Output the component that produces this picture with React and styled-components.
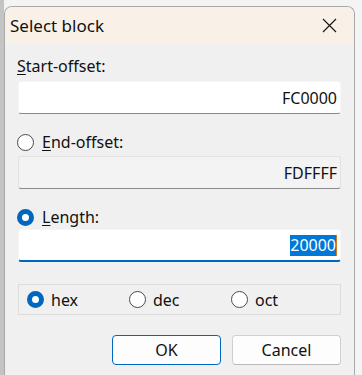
import React from 'react';
import styled, { createGlobalStyle } from 'styled-components';

const GlobalStyle = createGlobalStyle`
  html, body {
    margin: 0;
    padding: 0;
    background: #eaeaea;
    font-family: "Noto Sans", "Open Sans", sans-serif;
    overflow: hidden;
  }
`;

const Page = styled.div`
  width: 362px;
  height: 375px;
  padding: 6px 0 0 4px;
  box-sizing: border-box;
  background: linear-gradient(to right, #c4c4c4 0, #c4c4c4 4px, #f4f4f4 4px);
`;

const Window = styled.div`
  width: 351px;
  height: 380px;
  box-sizing: border-box;
  border: 1px solid #a9a9a9;
  border-bottom: none;
  border-radius: 8px 8px 0 0;
  overflow: hidden;
  display: flex;
  flex-direction: column;
  background: #f0f0f0;
`;

const TitleBar = styled.div`
  height: 37px;
  background: #f9f1e8;
  display: flex;
  align-items: center;
  justify-content: space-between;
  padding: 0 17px 0 5px;
  flex-shrink: 0;
`;

const Title = styled.span`
  font-size: 17px;
  color: #111;
`;

const CloseIcon = () => (
  <svg width="15" height="15" viewBox="0 0 15 15">
    <path d="M1 1 L14 14 M14 1 L1 14" stroke="#1a1a1a" strokeWidth="1.2" fill="none" />
  </svg>
);

const Body = styled.div`
  padding: 10px 13px 0 12px;
  display: flex;
  flex-direction: column;
`;

const Field = styled.div`
  display: flex;
  flex-direction: column;
  margin-bottom: ${p => p.$gap}px;
`;

const LabelRow = styled.div`
  height: 24px;
  display: flex;
  align-items: center;
  gap: 8px;
  font-size: 16px;
  color: #111;
  margin-bottom: ${p => p.$gap}px;
`;

const Key = styled.span`
  text-decoration: underline;
  text-underline-offset: 2px;
`;

const Radio = styled.span`
  width: 17px;
  height: 17px;
  box-sizing: border-box;
  border-radius: 50%;
  flex-shrink: 0;
  border: ${p => (p.$checked ? '5px solid #0067c0' : '1.5px solid #4a4a4a')};
  background: #fff;
`;

const Input = styled.div`
  margin-left: 1px;
  height: 33px;
  box-sizing: border-box;
  border-radius: 3px;
  display: flex;
  align-items: center;
  justify-content: flex-end;
  padding: 0 3px 0 0;
  font-size: 16px;
  color: #111;
  background: ${p => (p.$disabled ? '#f3f3f3' : '#ffffff')};
  border: 1px solid ${p => (p.$disabled ? '#e2e2e2' : '#f6f6f6')};
  border-bottom: ${p => (p.$focused ? '2px solid #0067c0' : '1px solid #8a8a8a')};
`;

const Selected = styled.span`
  background: #0078d7;
  color: #fff;
  border-right: 1px solid #d07a20;
  line-height: 21px;
`;

const GroupBox = styled.div`
  margin: 0 0 0 1px;
  height: 31px;
  box-sizing: border-box;
  border: 1px solid #dcdcdc;
  display: grid;
  grid-template-columns: 102px 102px 1fr;
  align-items: center;
  padding-left: 8px;
`;

const Option = styled.label`
  display: flex;
  align-items: center;
  gap: 7px;
  font-size: 16px;
  color: #111;
`;

const Buttons = styled.div`
  display: flex;
  justify-content: flex-end;
  gap: 11px;
  margin-top: 20px;
`;

const Button = styled.button`
  width: 109px;
  height: 30px;
  border-radius: 4px;
  background: #fdfdfd;
  font-family: inherit;
  font-size: 16px;
  color: #111;
  border: 1px solid ${p => (p.$primary ? '#0067c0' : '#d0d0d0')};
  border-bottom-color: ${p => (p.$primary ? '#0067c0' : '#b8b8b8')};
  padding: 0;
`;

export default function App() {
  return (
    <>
      <GlobalStyle />
      <Page>
        <Window>
          <TitleBar>
            <Title>Select block</Title>
            <CloseIcon />
          </TitleBar>
          <Body>
            <Field $gap={16}>
              <LabelRow $gap={3}>
                <span><Key>S</Key>tart-offset:</span>
              </LabelRow>
              <Input>FC0000</Input>
            </Field>
            <Field $gap={16}>
              <LabelRow $gap={2}>
                <Radio />
                <span><Key>E</Key>nd-offset:</span>
              </LabelRow>
              <Input $disabled>FDFFFF</Input>
            </Field>
            <Field $gap={22}>
              <LabelRow $gap={0}>
                <Radio $checked />
                <span><Key>L</Key>ength:</span>
              </LabelRow>
              <Input $focused><Selected>20000</Selected></Input>
            </Field>
            <GroupBox>
              <Option><Radio $checked />hex</Option>
              <Option><Radio />dec</Option>
              <Option><Radio />oct</Option>
            </GroupBox>
            <Buttons>
              <Button $primary>OK</Button>
              <Button>Cancel</Button>
            </Buttons>
          </Body>
        </Window>
      </Page>
    </>
  );
}
